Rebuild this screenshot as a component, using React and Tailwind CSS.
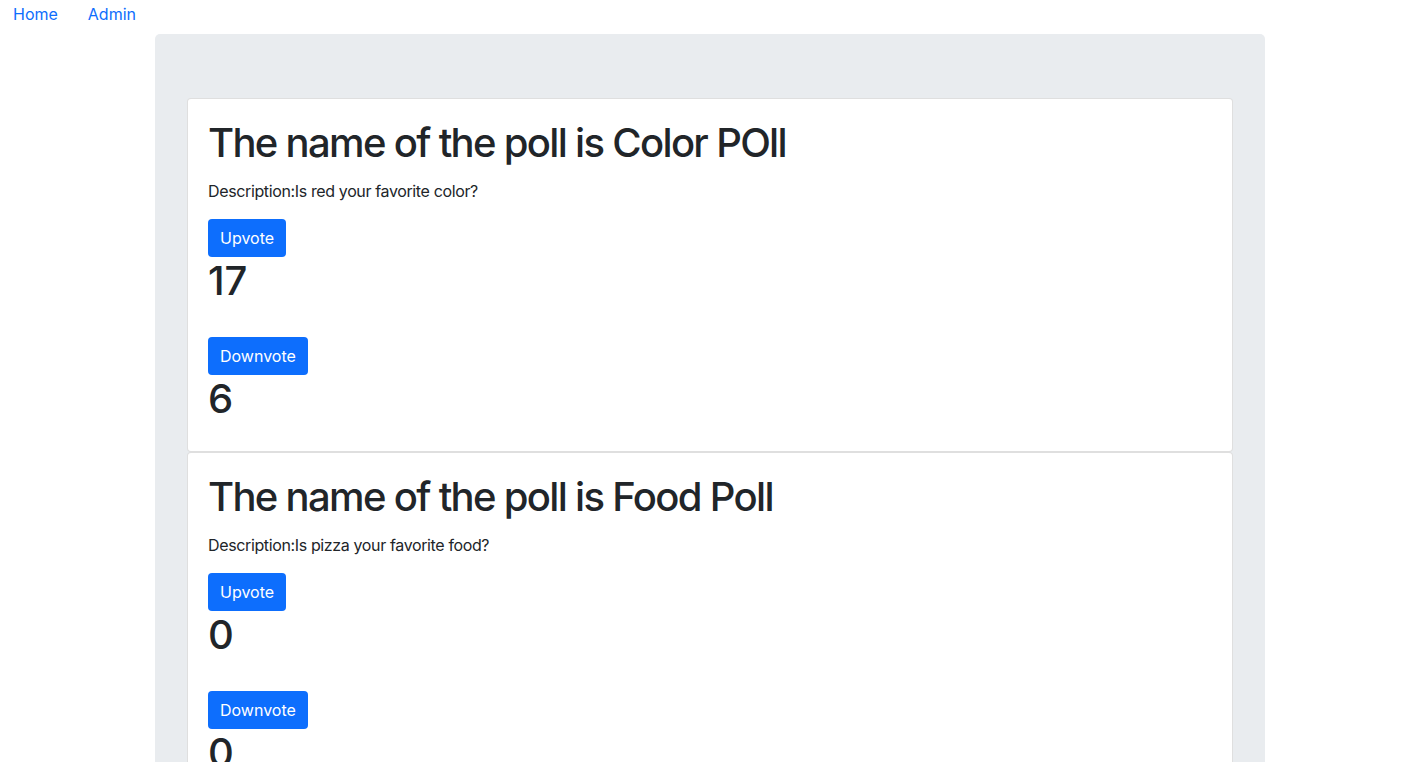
const POLLS = [
  { name: 'Color POll', description: 'Is red your favorite color?', up: 17, down: 6 },
  { name: 'Food Poll', description: 'Is pizza your favorite food?', up: 0, down: 0 },
];

function PollCard({ poll }) {
  return (
    <div className="bg-white border border-black/[0.125] rounded-[4px]">
      <div className="p-5">
        <h1 className="text-[40px] leading-[48px] font-medium tracking-[-0.042em] mb-3">The name of the poll is {poll.name}</h1>
        <p className="text-base leading-6 tracking-[-0.023em] mb-4">Description:{poll.description}</p>
        <button className="bg-[#0d6efd] text-white text-base leading-6 px-3 py-[7px] rounded-[4px]">Upvote</button>
        <h1 className="text-[40px] leading-[48px] font-medium mb-2">{poll.up}</h1>
        <br />
        <button className="bg-[#0d6efd] text-white text-base leading-6 px-3 py-[7px] rounded-[4px]">Downvote</button>
        <h1 className="text-[40px] leading-[48px] font-medium mb-2">{poll.down}</h1>
      </div>
    </div>
  );
}

export default function App() {
  return (
    <div className="min-h-screen bg-white text-[#212529] font-['Inter','Liberation_Sans',sans-serif]">
      <nav className="flex gap-[30px] pl-[13px] pt-[2px] pb-2 text-base leading-6">
        <a href="#" className="text-[#0d6efd]">Home</a>
        <a href="#" className="text-[#0d6efd]">Admin</a>
      </nav>
      <div className="w-[1110px] ml-[155px] bg-[#e9ecef] rounded-[5px] pt-16 px-8 pb-16">
        {POLLS.map(p => (
          <PollCard key={p.name} poll={p} />
        ))}
      </div>
    </div>
  );
}
